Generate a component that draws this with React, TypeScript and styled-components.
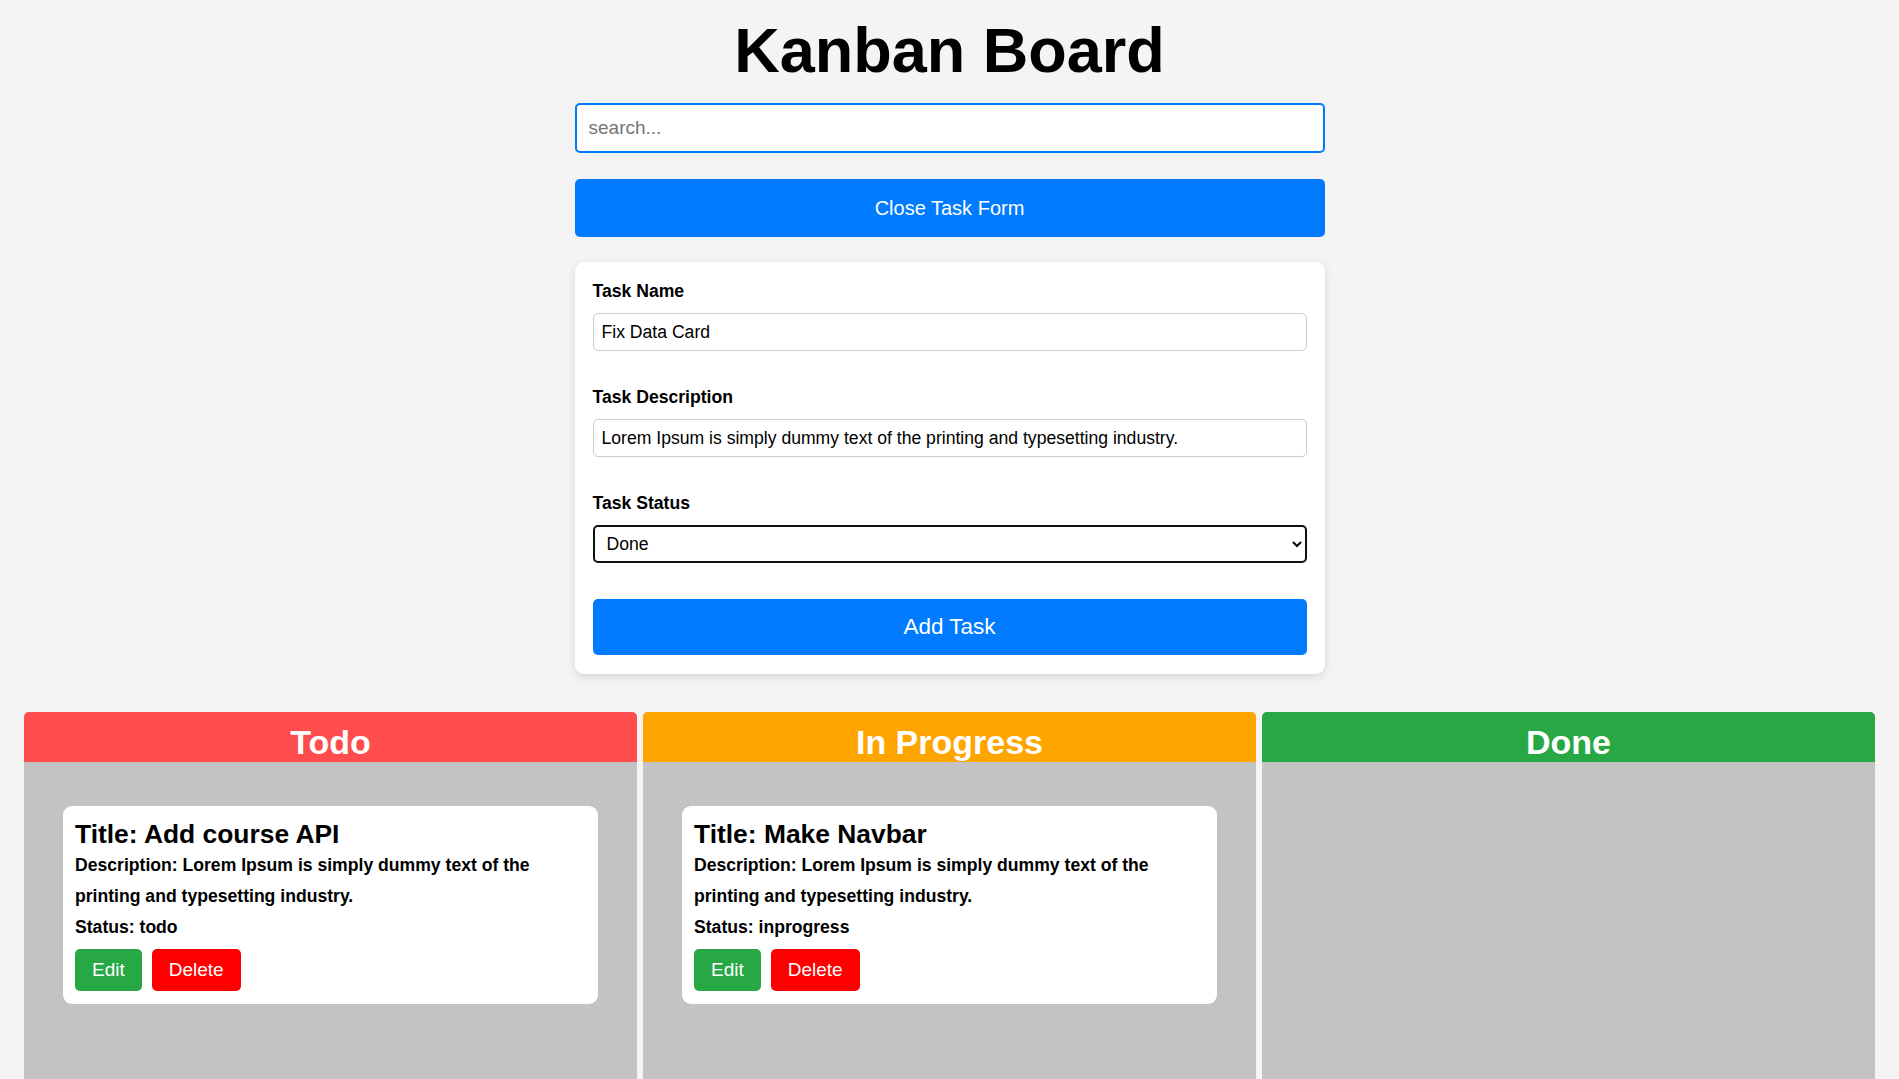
import React from 'react';
import styled, { createGlobalStyle } from 'styled-components';

const GlobalStyle = createGlobalStyle`
  * {
    box-sizing: border-box;
  }
  body {
    margin: 0;
    background: #f4f4f4;
    font-family: 'Liberation Sans', Arial, sans-serif;
    color: #000;
  }
`;

const Page = styled.div`
  padding: 13px 24px 0;
  display: flex;
  flex-direction: column;
  align-items: center;
`;

const Title = styled.h1`
  margin: 0;
  font-size: 63px;
  line-height: 74px;
  font-weight: 700;
  text-align: center;
`;

const Narrow = styled.div`
  width: 750px;
  display: flex;
  flex-direction: column;
`;

const Search = styled.input`
  margin-top: 16px;
  height: 50px;
  padding: 0 12px;
  border: 2px solid #007bff;
  border-radius: 5px;
  background: #fff;
  font-family: inherit;
  font-size: 19px;
  outline: none;
  &::placeholder {
    color: #757575;
  }
`;

const BlueButton = styled.button<{ $big?: boolean }>`
  height: ${(p) => (p.$big ? 56 : 58)}px;
  border: none;
  border-radius: 5px;
  background: #007bff;
  color: #fff;
  font-family: inherit;
  font-size: ${(p) => (p.$big ? 22.5 : 20)}px;
  cursor: pointer;
`;

const ToggleButton = styled(BlueButton)`
  margin-top: 26px;
`;

const FormCard = styled.form`
  margin-top: 25px;
  background: #fff;
  border-radius: 9px;
  padding: 19px 18px 19px;
  box-shadow: 0 3px 10px rgba(0, 0, 0, 0.12);
  display: flex;
  flex-direction: column;
  gap: 36px;
`;

const Field = styled.div`
  display: flex;
  flex-direction: column;
`;

const Label = styled.label`
  font-size: 17.6px;
  line-height: 20px;
  font-weight: 700;
  margin-bottom: 12px;
`;

const TextInput = styled.input`
  height: 38px;
  padding: 0 8px;
  border: 1px solid #ccc;
  border-radius: 5px;
  font-family: inherit;
  font-size: 17.6px;
  color: #000;
  background: #fff;
  outline: none;
`;

const Select = styled.select`
  height: 38px;
  padding: 0 8px;
  border: 2px solid #111;
  border-radius: 5px;
  font-family: inherit;
  font-size: 17.6px;
  color: #000;
  background: #fff;
  outline: none;
`;

const Board = styled.div`
  align-self: stretch;
  margin-top: 38px;
  display: flex;
  gap: 6px;
`;

const Column = styled.section`
  flex: 1;
  display: flex;
  flex-direction: column;
  min-height: 520px;
  background: #c3c3c3;
  border-radius: 5px 5px 0 0;
  overflow: hidden;
`;

const ColumnHead = styled.h2<{ $color: string }>`
  margin: 0;
  height: 50px;
  padding-top: 11px;
  background: ${(p) => p.$color};
  color: #fff;
  font-size: 34px;
  line-height: 38px;
  font-weight: 700;
  text-align: center;
`;

const ColumnBody = styled.div`
  padding: 44px 39px;
  display: flex;
  flex-direction: column;
  gap: 20px;
`;

const TaskCard = styled.div`
  background: #fff;
  border-radius: 9px;
  padding: 13px 12px;
`;

const TaskTitle = styled.h3`
  margin: 0;
  font-size: 26.4px;
  line-height: 31px;
  font-weight: 700;
`;

const TaskLine = styled.p`
  margin: 0;
  font-size: 17.6px;
  line-height: 30.8px;
  font-weight: 700;
`;

const Actions = styled.div`
  margin-top: 7px;
  display: flex;
  gap: 10px;
`;

const SmallButton = styled.button<{ $color: string }>`
  height: 42px;
  padding: 0 17px;
  border: none;
  border-radius: 5px;
  background: ${(p) => p.$color};
  color: #fff;
  font-family: inherit;
  font-size: 19px;
  cursor: pointer;
`;

type Task = { title: string; status: string };

const columns: { key: string; name: string; color: string; tasks: Task[] }[] = [
  {
    key: 'todo',
    name: 'Todo',
    color: '#ff4d4d',
    tasks: [{ title: 'Add course API', status: 'todo' }]
  },
  {
    key: 'inprogress',
    name: 'In Progress',
    color: '#ffa500',
    tasks: [{ title: 'Make Navbar', status: 'inprogress' }]
  },
  { key: 'done', name: 'Done', color: '#28a745', tasks: [] }
];

const lorem =
  'Lorem Ipsum is simply dummy text of the printing and typesetting industry.';

export default function App() {
  return (
    <>
      <GlobalStyle />
      <Page>
        <Title>Kanban Board</Title>
        <Narrow>
          <Search placeholder="search..." />
          <ToggleButton type="button">Close Task Form</ToggleButton>
          <FormCard onSubmit={(e) => e.preventDefault()}>
            <Field>
              <Label>Task Name</Label>
              <TextInput defaultValue="Fix Data Card" />
            </Field>
            <Field>
              <Label>Task Description</Label>
              <TextInput defaultValue={lorem} />
            </Field>
            <Field>
              <Label>Task Status</Label>
              <Select defaultValue="done">
                <option value="todo">Todo</option>
                <option value="inprogress">In Progress</option>
                <option value="done">Done</option>
              </Select>
            </Field>
            <BlueButton $big type="submit">
              Add Task
            </BlueButton>
          </FormCard>
        </Narrow>
        <Board>
          {columns.map((col) => (
            <Column key={col.key}>
              <ColumnHead $color={col.color}>{col.name}</ColumnHead>
              <ColumnBody>
                {col.tasks.map((t) => (
                  <TaskCard key={t.title}>
                    <TaskTitle>{`Title: ${t.title}`}</TaskTitle>
                    <TaskLine>{`Description: ${lorem}`}</TaskLine>
                    <TaskLine>{`Status: ${t.status}`}</TaskLine>
                    <Actions>
                      <SmallButton $color="#28a745">Edit</SmallButton>
                      <SmallButton $color="#ff0000">Delete</SmallButton>
                    </Actions>
                  </TaskCard>
                ))}
              </ColumnBody>
            </Column>
          ))}
        </Board>
      </Page>
    </>
  );
}
